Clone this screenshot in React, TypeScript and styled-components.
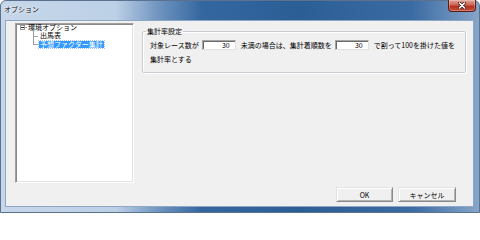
import React from "react";
import styled, { createGlobalStyle } from "styled-components";

const GlobalStyle = createGlobalStyle`
  html, body {
    margin: 0;
    padding: 0;
    background: #fff;
  }
  body {
    width: 480px;
    height: 213px;
    overflow: hidden;
    font-family: "Noto Sans CJK JP", "Noto Sans", sans-serif;
  }
  * { box-sizing: border-box; }
`;

const App = () => {
  return (
    <>
      <GlobalStyle />
      <Window>
        <TitleBar>
          <Title>オプション</Title>
          <CloseButton>
            <svg width="10" height="7" viewBox="0 0 10 7">
              <path d="M2.5 1 L7.5 6 M7.5 1 L2.5 6" stroke="#3b1a16" strokeWidth="3" strokeLinecap="round" />
              <path d="M2.5 1 L7.5 6 M7.5 1 L2.5 6" stroke="#fff" strokeWidth="1.6" strokeLinecap="round" />
            </svg>
          </CloseButton>
        </TitleBar>
        <Client>
          <Tree>
            <RootRow>
              <Expander />
              <Dash />
              <NodeLabel>環境オプション</NodeLabel>
            </RootRow>
            <ChildList>
              <ChildRow>
                <NodeLabel>出馬表</NodeLabel>
              </ChildRow>
              <ChildRow>
                <NodeLabel selected>予想ファクター集計</NodeLabel>
              </ChildRow>
            </ChildList>
          </Tree>
          <GroupBox>
            <Legend>集計率設定</Legend>
            <FieldRow>
              <span>対象レース数が</span>
              <NumberBox>30</NumberBox>
              <span>未満の場合は、集計着順数を</span>
              <NumberBox>30</NumberBox>
              <span>で割って100を掛けた値を</span>
            </FieldRow>
            <FieldRow>
              <span>集計率とする</span>
            </FieldRow>
          </GroupBox>
          <ButtonRow>
            <Button width={57}>OK</Button>
            <Button width={58}>キャンセル</Button>
          </ButtonRow>
        </Client>
      </Window>
    </>
  );
};

export default App;

const Window = styled.div`
  width: 480px;
  height: 213px;
  display: flex;
  flex-direction: column;
  border: 1px solid #5a7190;
  border-radius: 6px 6px 0 0;
  background: linear-gradient(
    90deg,
    #c6d7ea 0%,
    #bcd0e6 24%,
    #6f94bf 33%,
    #3467a0 42%,
    #2c5e96 62%,
    #3a6ba2 86%,
    #86a5c9 100%
  );
`;

const TitleBar = styled.div`
  height: 19px;
  display: flex;
  align-items: flex-start;
  padding-left: 3px;
  padding-right: 3px;
`;

const Title = styled.div`
  margin-top: 4px;
  font-size: 7px;
  line-height: 9px;
  color: #111;
  text-shadow: 0 0 4px rgba(255, 255, 255, 0.95), 0 0 2px rgba(255, 255, 255, 0.9);
`;

const CloseButton = styled.div`
  margin-left: auto;
  margin-top: -1px;
  width: 28px;
  height: 12px;
  display: flex;
  align-items: center;
  justify-content: center;
  border: 1px solid #5b1d17;
  border-top: none;
  border-radius: 0 0 4px 4px;
  background: linear-gradient(180deg, #e0a396 0%, #cf6d5c 40%, #b6301f 60%, #c4533c 100%);
  box-shadow: inset 0 0 0 1px rgba(255, 255, 255, 0.25);
`;

const Client = styled.div`
  flex: 1;
  margin: 0 5px 5px 4px;
  border: 1px solid #8fa6c4;
  background: #f0f0f0;
  display: grid;
  grid-template-columns: 119px 1fr;
  grid-template-rows: 1fr auto;
  column-gap: 8px;
  row-gap: 4px;
  padding: 2px 7px 4px 9px;
`;

const Tree = styled.div`
  grid-row: 1;
  grid-column: 1;
  background: #fff;
  border: 1px solid;
  border-color: #a0a0a0 #fff #fff #a0a0a0;
  box-shadow: inset 1px 1px 0 #8a8a8a, inset -1px -1px 0 #e3e3e3;
  font-size: 7px;
  color: #000;
`;

const RootRow = styled.div`
  height: 8.5px;
  margin-top: -1px;
  display: flex;
  align-items: center;
  padding-left: 4px;
`;

const Expander = styled.div`
  width: 5px;
  height: 5px;
  border: 1px solid #9a9a9a;
  background: #fff;
  display: flex;
  align-items: center;
  justify-content: center;
  &::after {
    content: "";
    width: 3px;
    height: 1px;
    background: #333;
  }
`;

const Dash = styled.div`
  width: 2px;
  height: 1px;
  background: #a0a0a0;
`;

const ChildList = styled.div`
  position: relative;
  &::before {
    content: "";
    position: absolute;
    left: 17px;
    top: -2px;
    bottom: 4px;
    width: 1px;
    background: #a0a0a0;
  }
`;

const ChildRow = styled.div`
  position: relative;
  height: 8.5px;
  display: flex;
  align-items: center;
  padding-left: 23px;
  &::before {
    content: "";
    position: absolute;
    left: 17px;
    top: 4px;
    width: 5px;
    height: 1px;
    background: #a0a0a0;
  }
`;

const NodeLabel = styled.span<{ selected?: boolean }>`
  padding: 0 1px;
  line-height: 7px;
  height: 7px;
  white-space: nowrap;
  background: ${(p) => (p.selected ? "#3399ff" : "transparent")};
  color: ${(p) => (p.selected ? "#fff" : "#000")};
  outline: ${(p) => (p.selected ? "1px dotted #a0c8f0" : "none")};
`;

const GroupBox = styled.fieldset`
  grid-row: 1;
  grid-column: 2;
  align-self: start;
  margin: 4px 0 0 0;
  padding: 4px 6px 9px 7px;
  border: 1px solid #c9cdd2;
  border-radius: 2px;
  box-shadow: inset 1px 1px 0 #fff, 1px 1px 0 #fff;
  font-size: 7px;
  color: #000;
  min-width: 0;
`;

const Legend = styled.legend`
  margin-left: -4px;
  padding: 0 1px;
  font-size: 7px;
  line-height: 9px;
`;

const FieldRow = styled.div`
  display: flex;
  align-items: center;
  height: 10px;
  white-space: nowrap;
  & + & {
    margin-top: 4px;
    height: 9px;
  }
`;

const NumberBox = styled.div`
  width: 34px;
  height: 10px;
  margin: 0 5px 0 3px;
  padding-right: 5px;
  background: #fff;
  border: 1px solid;
  border-color: #a4a4a4 #e0e0e0 #e0e0e0 #a4a4a4;
  box-shadow: inset 1px 1px 0 #6a6a6a;
  font-size: 7px;
  line-height: 8px;
  text-align: right;
`;

const ButtonRow = styled.div`
  grid-row: 2;
  grid-column: 2;
  display: flex;
  justify-content: flex-end;
  gap: 5px;
  margin-right: 10px;
`;

const Button = styled.div<{ width: number }>`
  width: ${(p) => p.width}px;
  height: 15px;
  display: flex;
  align-items: center;
  justify-content: center;
  font-size: 7px;
  color: #000;
  background: #f0f0f0;
  border: 1px solid;
  border-color: #e3e3e3 #8a8a8a #8a8a8a #e3e3e3;
  box-shadow: inset 1px 1px 0 #fff, inset -1px -1px 0 #b4b4b4;
`;
